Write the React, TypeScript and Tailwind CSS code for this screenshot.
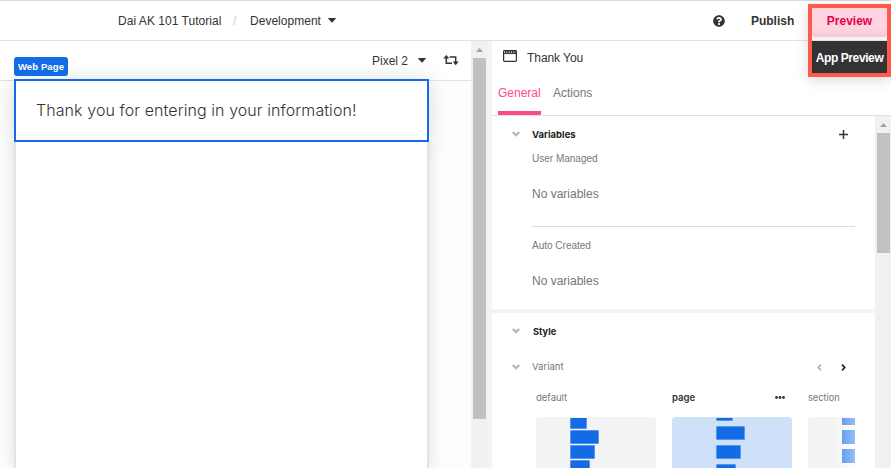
import type { ReactNode } from "react";

const arial = "font-['Liberation_Sans',Arial,sans-serif]";
const inter = "font-['Inter',sans-serif]";

function Caret() {
  return (
    <svg className="block shrink-0" width="8" height="5" viewBox="0 0 8 5">
      <path d="M0.5 0H7.5Q8.2 0 7.7 0.7L4.5 4.2Q4 4.7 3.5 4.2L0.3 0.7Q-0.2 0 0.5 0Z" fill="#333" />
    </svg>
  );
}

function Chevron() {
  return (
    <svg className="-ml-px block shrink-0" width="8" height="6" viewBox="0 0 8 6">
      <path d="M0.8 1L4 4.2L7.2 1" fill="none" stroke="#b5b5b5" strokeWidth="2.2" />
    </svg>
  );
}

function Scrollbar({ thumb }: { thumb: string }) {
  return (
    <div className="flex w-4 shrink-0 flex-col bg-[#f1f1f1] pl-0.5">
      <div className="flex h-[17px] w-[13px] shrink-0 items-center justify-center pt-px">
        <svg className="block" width="7" height="4" viewBox="0 0 7 4">
          <path d="M3.5 0L7 4H0Z" fill="#a3a3a3" />
        </svg>
      </div>
      <div className={`w-[13px] shrink-0 bg-[#c1c1c1] ${thumb}`} />
    </div>
  );
}

function Header() {
  return (
    <header className="flex h-[41px] shrink-0 items-center border-t border-b border-t-[#d9d9de] border-b-[#e2e2e4] pl-[118px] text-[12px] text-[#333]">
      <span className="w-[104px] whitespace-nowrap tracking-[0.04px]">Dai AK 101 Tutorial</span>
      <span className="ml-[11px] w-[17px] text-[#ccc]">/</span>
      <span className="w-[71px] tracking-[0.02px]">Development</span>
      <div className="ml-[7px]"><Caret /></div>
      <div className="ml-[377px]">
        <svg className="block" width="12" height="12" viewBox="0 0 512 512">
          <path
            fill="#333"
            d="M504 256c0 136.997-111.043 248-248 248S8 392.997 8 256C8 119.083 119.043 8 256 8s248 111.083 248 248zM262.655 90c-54.497 0-89.255 22.957-116.549 63.758-3.536 5.286-2.353 12.415 2.715 16.258l34.699 26.31c5.205 3.947 12.621 3.008 16.665-2.122 17.864-22.658 30.113-35.797 57.303-35.797 20.429 0 45.698 13.148 45.698 32.958 0 14.976-12.363 22.667-32.534 33.976C247.128 238.528 216 254.941 216 296v4c0 6.627 5.373 12 12 12h56c6.627 0 12-5.373 12-12v-1.333c0-28.462 83.186-29.647 83.186-106.667 0-58.002-60.165-102-116.531-102zM256 338c-25.365 0-46 20.635-46 46 0 25.364 20.635 46 46 46s46-20.636 46-46c0-25.365-20.635-46-46-46z"
          />
        </svg>
      </div>
      <span className="ml-[26px] font-bold tracking-[-0.02px]">Publish</span>
    </header>
  );
}

function Canvas() {
  return (
    <main className="flex w-[471px] shrink-0 flex-col overflow-hidden bg-[#fdfdfd]">
      <div className="relative flex h-10 shrink-0 items-center justify-end border-b border-[#e2e2e4] bg-white pr-3 text-[12px] text-[#333]">
        <div className={`absolute top-4 left-3.5 z-10 flex h-[19px] w-[54px] items-center justify-center rounded-[3px] bg-[#136be6] pt-px text-[9.5px] font-bold tracking-[0.12px] whitespace-nowrap text-white ${arial}`}>
          Web Page
        </div>
        <span>Pixel 2</span>
        <div className="ml-[10px]"><Caret /></div>
        <svg className="ml-[17px] block" width="16" height="11" viewBox="0 0 16 11">
          <g fill="none" stroke="#333" strokeWidth="1.5">
            <path d="M3.3 2.5V8.3H9" />
            <path d="M6.5 2H12.7V8.5" />
          </g>
          <path d="M3.3 0L6.3 3.6H0.3Z M12.7 10.2L15.7 6.6H9.7Z" fill="#333" />
        </svg>
      </div>
      <div className="relative -mt-0.5 ml-3.5 flex min-h-0 w-[415px] flex-1 flex-col">
        <div className="h-[63px] shrink-0 border-2 border-[#136be6] bg-white shadow-[0_2px_20px_rgba(0,0,0,0.15)]">
          <p className={`-ml-px pt-[17px] pl-[21px] text-[16px] leading-6 font-light tracking-[0.08px] whitespace-nowrap text-[#333] ${inter}`}>
            Thank you for entering in your information!
          </p>
        </div>
        <div className="relative mx-0.5 flex-1 bg-white shadow-[0_0_0_2px_#e3e3e3,0_0_16px_rgba(0,0,0,0.17)] [clip-path:inset(0_-30px_0_-30px)]" />
      </div>
    </main>
  );
}

function Heading({ children }: { children: ReactNode }) {
  return (
    <div className="flex h-4 items-center pl-[21px]">
      <Chevron />
      {children}
    </div>
  );
}

const bars = ["w-[17px]", "w-[29px]", "w-[25px]", "w-5"];

function Bars({ start }: { start: string }) {
  return (
    <div className={`flex flex-col ${start}`}>
      {bars.map((w) => (
        <div key={w} className={`h-3.5 shrink-0 rounded-[1px] border border-[#5296ee] bg-[#136be6] ${w}`} />
      ))}
    </div>
  );
}

function Variants() {
  return (
    <div className={`ml-11 flex w-[319px] gap-4 overflow-hidden text-[9.6px] leading-4 text-[#777] ${inter}`}>
      <div className="w-[120px] shrink-0">
        <div className="h-7 pt-px tracking-[-0.08px]">default</div>
        <div className="h-[51px] overflow-hidden rounded-t bg-[#f3f3f3] pt-px pl-[34px]">
          <div className="h-[50px] overflow-hidden">
            <Bars start="-mt-[3px] gap-[1px]" />
          </div>
        </div>
      </div>
      <div className="w-[120px] shrink-0">
        <div className="flex h-7 justify-between pt-px pr-[7px] font-semibold text-[#333]">
          <span>page</span>
          <svg className="mt-1.5 block" width="10" height="3" viewBox="0 0 10 3">
            <circle cx="1.5" cy="1.5" r="1.4" fill="#333" />
            <circle cx="5" cy="1.5" r="1.4" fill="#333" />
            <circle cx="8.5" cy="1.5" r="1.4" fill="#333" />
          </svg>
        </div>
        <div className="h-[51px] overflow-hidden rounded-t bg-[#cfe0f9] pt-px pl-11">
          <div className="h-[50px] overflow-hidden">
            <Bars start="-mt-[11px] gap-[5px]" />
          </div>
        </div>
      </div>
      <div className="w-[47px] shrink-0 overflow-hidden">
        <div className="h-7 pt-px text-[9.2px]">section</div>
        <div className="h-[51px] overflow-hidden rounded-tl bg-linear-to-r from-[#f3f3f3] from-50% to-[#fdfdfd] pt-px pl-[34px]">
          <div className="flex h-[50px] flex-col gap-[5px] overflow-hidden">
            <div className="-mt-[7px] h-3.5 shrink-0 bg-linear-to-r from-[#669df0] to-[#97bdf5]" />
            <div className="h-3.5 shrink-0 bg-linear-to-r from-[#669df0] to-[#97bdf5]" />
            <div className="h-3.5 shrink-0 bg-linear-to-r from-[#669df0] to-[#97bdf5]" />
          </div>
        </div>
      </div>
    </div>
  );
}

function Inspector() {
  return (
    <aside className="flex min-w-0 flex-1 flex-col bg-white">
      <div className="flex h-[34px] shrink-0 items-center pl-[11px] text-[12px] text-[#333]">
        <svg className="-mt-1 block" width="14" height="12" viewBox="0 0 14 12">
          <rect x="0.6" y="0.6" width="12.8" height="10.8" rx="0.8" fill="none" stroke="#333" strokeWidth="1.2" />
          <path d="M0.6 3.6H13.4" stroke="#333" strokeWidth="1" />
          <path d="M2 2.1H13" stroke="#333" strokeWidth="2" strokeDasharray="1.6 0.7" />
        </svg>
        <span className="ml-2.5 tracking-[-0.06px]">Thank You</span>
      </div>
      <nav className="flex h-[41px] shrink-0 gap-3 border-b border-[#e2e2e4] pl-1.5 text-[12px] text-[#777]">
        <div className="flex w-[43px] flex-col justify-between text-[#ff4a81]">
          <span className="pt-2.5 leading-4">General</span>
          <div className="h-1 shrink-0 bg-[#ff4a81]" />
        </div>
        <span className="pt-2.5 leading-4">Actions</span>
      </nav>
      <div className="flex min-h-0 flex-1">
        <div className="flex min-w-0 flex-1 flex-col text-[#777]">
          <section className="h-[193px] shrink-0 pt-2.5">
            <Heading>
              <span className={`ml-3 pt-0.5 text-[9.5px] font-bold text-[#222] ${inter}`}>Variables</span>
              <svg className="mr-[27px] ml-auto block" width="9" height="9" viewBox="0 0 9 9">
                <path d="M4.5 0V9M0 4.5H9" stroke="#333" strokeWidth="1.5" />
              </svg>
            </Heading>
            <div className="mr-5 ml-10">
              <div className="mt-[9px] text-[10px] leading-4">User Managed</div>
              <div className="mt-[19px] text-[12px] leading-4">No variables</div>
              <div className="mt-6 border-t border-[#ddd] pt-[11px] text-[10px] leading-4">Auto Created</div>
              <div className="mt-[19px] text-[12px] leading-4">No variables</div>
            </div>
          </section>
          <div className="h-1 shrink-0 bg-[#f3f3f3]" />
          <section className="min-h-0 flex-1 overflow-hidden pt-2.5">
            <Heading>
              <span className={`ml-[13px] pt-0.5 text-[9.2px] font-bold text-[#222] ${inter}`}>Style</span>
            </Heading>
            <div className="mt-5">
              <Heading>
                <span className={`ml-3 pt-px text-[9.5px] ${inter}`}>Variant</span>
                <div className="mr-[29px] ml-auto flex gap-[19px]">
                  <svg className="block" width="5" height="7" viewBox="0 0 5 7">
                    <path d="M4 0.7L1.3 3.5L4 6.3" fill="none" stroke="#aaa" strokeWidth="1.6" />
                  </svg>
                  <svg className="block" width="5" height="7" viewBox="0 0 5 7">
                    <path d="M1 0.7L3.7 3.5L1 6.3" fill="none" stroke="#222" strokeWidth="1.7" />
                  </svg>
                </div>
              </Heading>
            </div>
            <div className="mt-[14px]"><Variants /></div>
          </section>
        </div>
        <Scrollbar thumb="h-[120px]" />
      </div>
    </aside>
  );
}

export default function App() {
  return (
    <div className={`relative flex h-[468px] w-[891px] flex-col overflow-hidden bg-white ${arial}`}>
      <Header />
      <div className="flex min-h-0 flex-1">
        <Canvas />
        <Scrollbar thumb="h-[361px]" />
        <div className="w-[5px] shrink-0 bg-[#f4f4f4]" />
        <Inspector />
      </div>
      <div className="absolute top-1 left-[808px] flex h-[73px] w-[83px] flex-col border-4 border-[#ff5b4c] text-[12px] font-bold shadow-[0_3px_12px_rgba(0,0,0,0.15)]">
        <div className="flex h-[29px] shrink-0 items-center justify-center rounded-b-[3px] bg-linear-to-b from-[#ffd3e0] from-70% to-[#f8c9d6] pb-1 text-[#e6004c]">Preview</div>
        <div className="h-1 shrink-0 border-b border-[#e2e2e4] bg-[#f3f3f3]" />
        <div className="flex flex-1 items-center justify-center bg-[#333] pt-px whitespace-nowrap text-white">
          <span className="tracking-[-0.4px]">App Preview</span>
        </div>
      </div>
    </div>
  );
}
